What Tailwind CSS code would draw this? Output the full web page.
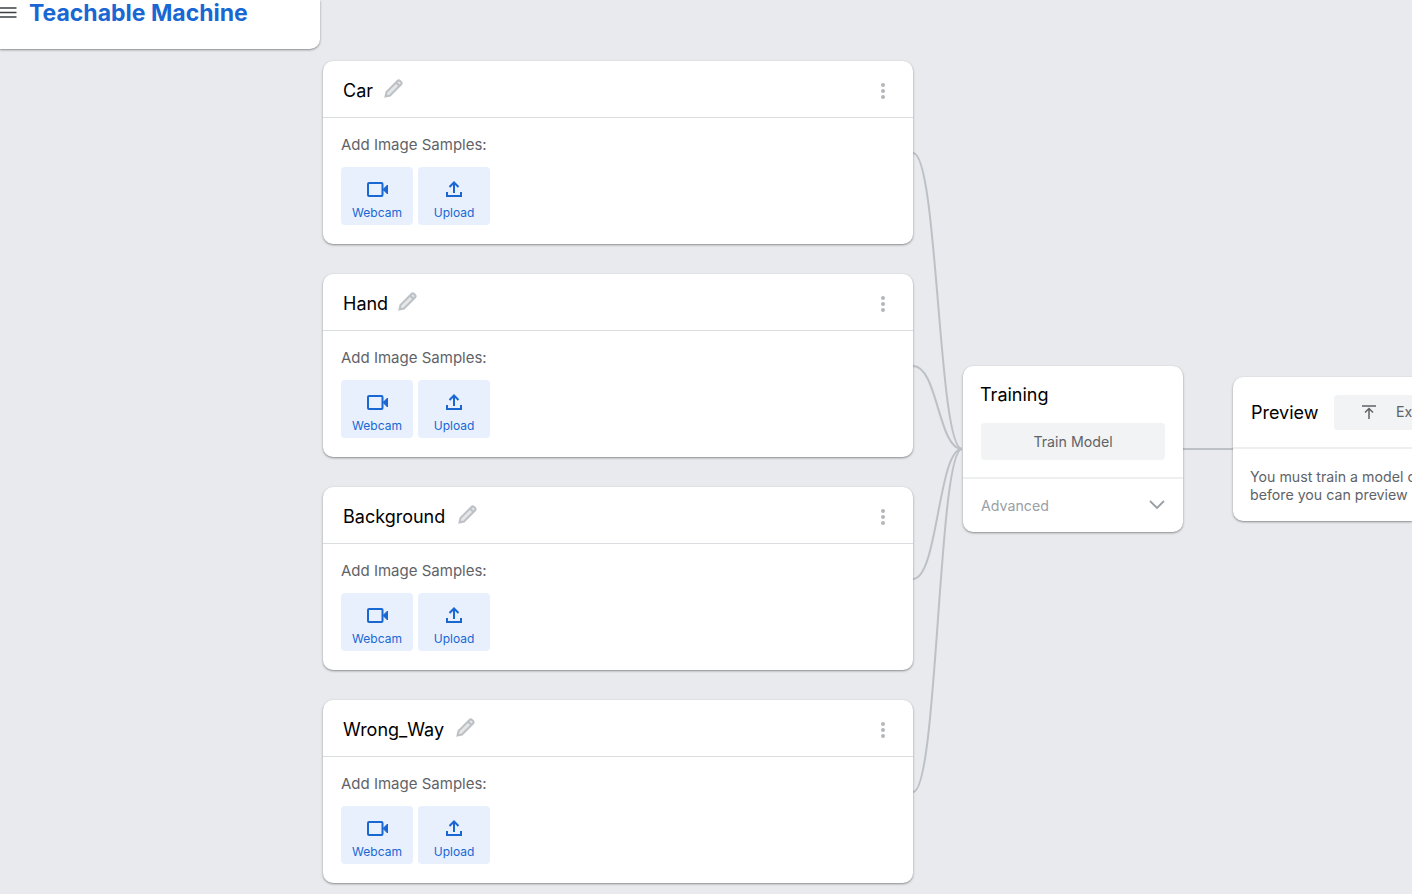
<!DOCTYPE html>
<html lang="en">
<head>
    <meta charset="UTF-8">
    <title>Teachable Machine</title>
    <script src="https://cdn.jsdelivr.net/npm/@tailwindcss/browser@4"></script>
</head>
<body class="relative h-[894px] w-[1412px] overflow-hidden bg-[#e8eaed] font-['Inter',sans-serif]">

<!-- top left header, scrolled partly out of view -->
<div class="absolute left-0 top-0 flex h-[49px] w-[320px] items-start rounded-br-[10px] bg-white shadow-[0_1px_2px_rgba(60,64,67,0.45),0_1px_3px_rgba(60,64,67,0.15)]">
    <svg class="mt-[7px]" width="17" height="12" viewBox="0 0 17 12"><path d="M0 1h16.500M0 5.500h16.500M0 10h16.500" stroke="#3c4043" stroke-width="1.600"/></svg>
    <span class="ml-[12px] mt-[-2px] whitespace-nowrap text-[23px] font-bold leading-[30px] text-[#1967d2]">Teachable Machine</span>
</div>

<!-- connectors -->
<svg class="absolute left-0 top-0" width="1412" height="894" fill="none" stroke="#bdc1c6" stroke-width="2">
    <path d="M913 153C938 153 938 449 962 449"/>
    <path d="M913 366C938 366 938 449 962 449"/>
    <path d="M913 579C938 579 938 449 962 449"/>
    <path d="M913 792C938 792 938 449 962 449"/>
    <path d="M1183 449H1233"/>
</svg>

<!-- class cards -->
<div class="absolute left-[323px] top-[61px] flex w-[590px] flex-col gap-[30px]">

    <div class="h-[183px] rounded-[10px] bg-white shadow-[0_1px_2px_rgba(60,64,67,0.45),0_1px_3px_rgba(60,64,67,0.15)]">
        <div class="flex h-[57px] items-center border-b border-[#dadce0] pl-[20px] pr-[27px] pt-[3px]">
            <span class="text-[18px] leading-none text-black">Car</span>
            <svg class="ml-[11px] mt-[-4px]" width="19" height="19" viewBox="0 0 19 19" fill="#e4e6e8" stroke="#bdc1c6" stroke-width="2"><path d="M1.500 17.500l1-4.500L13.500 2a1.800 1.800 0 0 1 2.500 0l1 1a1.800 1.800 0 0 1 0 2.500L6 16.500zM12 3.500l3.500 3.500"/></svg>
            <svg class="ml-auto" width="6" height="16" viewBox="0 0 6 16" fill="#b4b7bb"><circle cx="3" cy="2" r="2"/><circle cx="3" cy="8" r="2"/><circle cx="3" cy="14" r="2"/></svg>
        </div>
        <div class="pl-[18px] pt-[18px]">
            <p class="text-[15px] leading-[18px] text-[#5f6368]">Add Image Samples:</p>
            <div class="mt-[13px] flex gap-[5px]">
                <button class="flex h-[58px] w-[72px] flex-col items-center rounded-[4px] bg-[#e8f0fe] pt-[15px] text-[12px] leading-[14px] text-[#1967d2]">
                    <svg width="21" height="15" viewBox="0 0 21 15" fill="none"><rect x="1" y="1" width="14.500" height="13" rx="1" stroke="#1967d2" stroke-width="2"/><path d="M16 7.500l4.500-4.500v9z" fill="#1967d2" stroke="#1967d2"/></svg>
                    <span class="mt-[9px]">Webcam</span>
                </button>
                <button class="flex h-[58px] w-[72px] flex-col items-center rounded-[4px] bg-[#e8f0fe] pt-[14px] text-[12px] leading-[14px] text-[#1967d2]">
                    <svg width="16" height="16" viewBox="0 0 16 16" fill="none" stroke="#1967d2" stroke-width="2"><path d="M8 12V2M3.500 6L8 1.500 12.500 6M1 11v4h14v-4"/></svg>
                    <span class="mt-[9px]">Upload</span>
                </button>
            </div>
        </div>
    </div>

    <div class="h-[183px] rounded-[10px] bg-white shadow-[0_1px_2px_rgba(60,64,67,0.45),0_1px_3px_rgba(60,64,67,0.15)]">
        <div class="flex h-[57px] items-center border-b border-[#dadce0] pl-[20px] pr-[27px] pt-[3px]">
            <span class="text-[18px] leading-none text-black">Hand</span>
            <svg class="ml-[10px] mt-[-4px]" width="19" height="19" viewBox="0 0 19 19" fill="#e4e6e8" stroke="#bdc1c6" stroke-width="2"><path d="M1.500 17.500l1-4.500L13.500 2a1.800 1.800 0 0 1 2.500 0l1 1a1.800 1.800 0 0 1 0 2.500L6 16.500zM12 3.500l3.500 3.500"/></svg>
            <svg class="ml-auto" width="6" height="16" viewBox="0 0 6 16" fill="#b4b7bb"><circle cx="3" cy="2" r="2"/><circle cx="3" cy="8" r="2"/><circle cx="3" cy="14" r="2"/></svg>
        </div>
        <div class="pl-[18px] pt-[18px]">
            <p class="text-[15px] leading-[18px] text-[#5f6368]">Add Image Samples:</p>
            <div class="mt-[13px] flex gap-[5px]">
                <button class="flex h-[58px] w-[72px] flex-col items-center rounded-[4px] bg-[#e8f0fe] pt-[15px] text-[12px] leading-[14px] text-[#1967d2]">
                    <svg width="21" height="15" viewBox="0 0 21 15" fill="none"><rect x="1" y="1" width="14.500" height="13" rx="1" stroke="#1967d2" stroke-width="2"/><path d="M16 7.500l4.500-4.500v9z" fill="#1967d2" stroke="#1967d2"/></svg>
                    <span class="mt-[9px]">Webcam</span>
                </button>
                <button class="flex h-[58px] w-[72px] flex-col items-center rounded-[4px] bg-[#e8f0fe] pt-[14px] text-[12px] leading-[14px] text-[#1967d2]">
                    <svg width="16" height="16" viewBox="0 0 16 16" fill="none" stroke="#1967d2" stroke-width="2"><path d="M8 12V2M3.500 6L8 1.500 12.500 6M1 11v4h14v-4"/></svg>
                    <span class="mt-[9px]">Upload</span>
                </button>
            </div>
        </div>
    </div>

    <div class="h-[183px] rounded-[10px] bg-white shadow-[0_1px_2px_rgba(60,64,67,0.45),0_1px_3px_rgba(60,64,67,0.15)]">
        <div class="flex h-[57px] items-center border-b border-[#dadce0] pl-[20px] pr-[27px] pt-[3px]">
            <span class="text-[18px] leading-none text-black">Background</span>
            <svg class="ml-[13px] mt-[-4px]" width="19" height="19" viewBox="0 0 19 19" fill="#e4e6e8" stroke="#bdc1c6" stroke-width="2"><path d="M1.500 17.500l1-4.500L13.500 2a1.800 1.800 0 0 1 2.500 0l1 1a1.800 1.800 0 0 1 0 2.500L6 16.500zM12 3.500l3.500 3.500"/></svg>
            <svg class="ml-auto" width="6" height="16" viewBox="0 0 6 16" fill="#b4b7bb"><circle cx="3" cy="2" r="2"/><circle cx="3" cy="8" r="2"/><circle cx="3" cy="14" r="2"/></svg>
        </div>
        <div class="pl-[18px] pt-[18px]">
            <p class="text-[15px] leading-[18px] text-[#5f6368]">Add Image Samples:</p>
            <div class="mt-[13px] flex gap-[5px]">
                <button class="flex h-[58px] w-[72px] flex-col items-center rounded-[4px] bg-[#e8f0fe] pt-[15px] text-[12px] leading-[14px] text-[#1967d2]">
                    <svg width="21" height="15" viewBox="0 0 21 15" fill="none"><rect x="1" y="1" width="14.500" height="13" rx="1" stroke="#1967d2" stroke-width="2"/><path d="M16 7.500l4.500-4.500v9z" fill="#1967d2" stroke="#1967d2"/></svg>
                    <span class="mt-[9px]">Webcam</span>
                </button>
                <button class="flex h-[58px] w-[72px] flex-col items-center rounded-[4px] bg-[#e8f0fe] pt-[14px] text-[12px] leading-[14px] text-[#1967d2]">
                    <svg width="16" height="16" viewBox="0 0 16 16" fill="none" stroke="#1967d2" stroke-width="2"><path d="M8 12V2M3.500 6L8 1.500 12.500 6M1 11v4h14v-4"/></svg>
                    <span class="mt-[9px]">Upload</span>
                </button>
            </div>
        </div>
    </div>

    <div class="h-[183px] rounded-[10px] bg-white shadow-[0_1px_2px_rgba(60,64,67,0.45),0_1px_3px_rgba(60,64,67,0.15)]">
        <div class="flex h-[57px] items-center border-b border-[#dadce0] pl-[20px] pr-[27px] pt-[3px]">
            <span class="text-[18px] leading-none text-black">Wrong_Way</span>
            <svg class="ml-[12px] mt-[-4px]" width="19" height="19" viewBox="0 0 19 19" fill="#e4e6e8" stroke="#bdc1c6" stroke-width="2"><path d="M1.500 17.500l1-4.500L13.500 2a1.800 1.800 0 0 1 2.500 0l1 1a1.800 1.800 0 0 1 0 2.500L6 16.500zM12 3.500l3.500 3.500"/></svg>
            <svg class="ml-auto" width="6" height="16" viewBox="0 0 6 16" fill="#b4b7bb"><circle cx="3" cy="2" r="2"/><circle cx="3" cy="8" r="2"/><circle cx="3" cy="14" r="2"/></svg>
        </div>
        <div class="pl-[18px] pt-[18px]">
            <p class="text-[15px] leading-[18px] text-[#5f6368]">Add Image Samples:</p>
            <div class="mt-[13px] flex gap-[5px]">
                <button class="flex h-[58px] w-[72px] flex-col items-center rounded-[4px] bg-[#e8f0fe] pt-[15px] text-[12px] leading-[14px] text-[#1967d2]">
                    <svg width="21" height="15" viewBox="0 0 21 15" fill="none"><rect x="1" y="1" width="14.500" height="13" rx="1" stroke="#1967d2" stroke-width="2"/><path d="M16 7.500l4.500-4.500v9z" fill="#1967d2" stroke="#1967d2"/></svg>
                    <span class="mt-[9px]">Webcam</span>
                </button>
                <button class="flex h-[58px] w-[72px] flex-col items-center rounded-[4px] bg-[#e8f0fe] pt-[14px] text-[12px] leading-[14px] text-[#1967d2]">
                    <svg width="16" height="16" viewBox="0 0 16 16" fill="none" stroke="#1967d2" stroke-width="2"><path d="M8 12V2M3.500 6L8 1.500 12.500 6M1 11v4h14v-4"/></svg>
                    <span class="mt-[9px]">Upload</span>
                </button>
            </div>
        </div>
    </div>
</div>

<!-- training -->
<div class="absolute left-[963px] top-[366px] h-[166px] w-[220px] rounded-[10px] bg-white shadow-[0_1px_2px_rgba(60,64,67,0.45),0_1px_3px_rgba(60,64,67,0.15)]">
    <div class="h-[113px] border-b-2 border-[#eeeff1] px-[18px] pt-[18px]">
        <h2 class="ml-[-1px] text-[18px] leading-[22px] text-black">Training</h2>
        <button class="mt-[17px] h-[37px] w-full rounded-[4px] bg-[#f1f3f4] text-[14.200px] text-[#5f6368]">Train Model</button>
    </div>
    <div class="flex h-[53px] items-center justify-between px-[18px]">
        <span class="text-[14.200px] text-[#9aa0a6]">Advanced</span>
        <svg class="mt-[-2px]" width="16" height="10" viewBox="0 0 16 10" fill="none" stroke="#9aa0a6" stroke-width="1.800"><path d="M1 1l7 7 7-7"/></svg>
    </div>
</div>

<!-- preview -->
<div class="absolute left-[1233px] top-[377px] h-[144px] w-[179px] overflow-hidden rounded-l-[10px] bg-white shadow-[0_1px_2px_rgba(60,64,67,0.45),0_1px_3px_rgba(60,64,67,0.15)]">
    <div class="flex h-[72px] items-center border-b-2 border-[#eeeff1] pl-[18px]">
        <h2 class="mt-[2px] w-[83px] shrink-0 text-[18px] leading-[22px] text-black">Preview</h2>
        <button class="flex h-[35px] w-[180px] shrink-0 items-center rounded-[4px] bg-[#f1f3f4] pl-[28px] text-[14.200px] text-[#5f6368]">
            <svg width="14" height="14" viewBox="0 0 14 14" fill="none" stroke="#5f6368" stroke-width="1.500"><path d="M0 1h14M7 14V4M3 7.500L7 3.500l4 4"/></svg>
            <span class="ml-[20px]">Export Model</span>
        </button>
    </div>
    <p class="whitespace-nowrap pl-[17px] pt-[19px] text-[14.200px] leading-[18px] text-[#5f6368]">You must train a model on the left<br>before you can preview here</p>
</div>

</body>
</html>
